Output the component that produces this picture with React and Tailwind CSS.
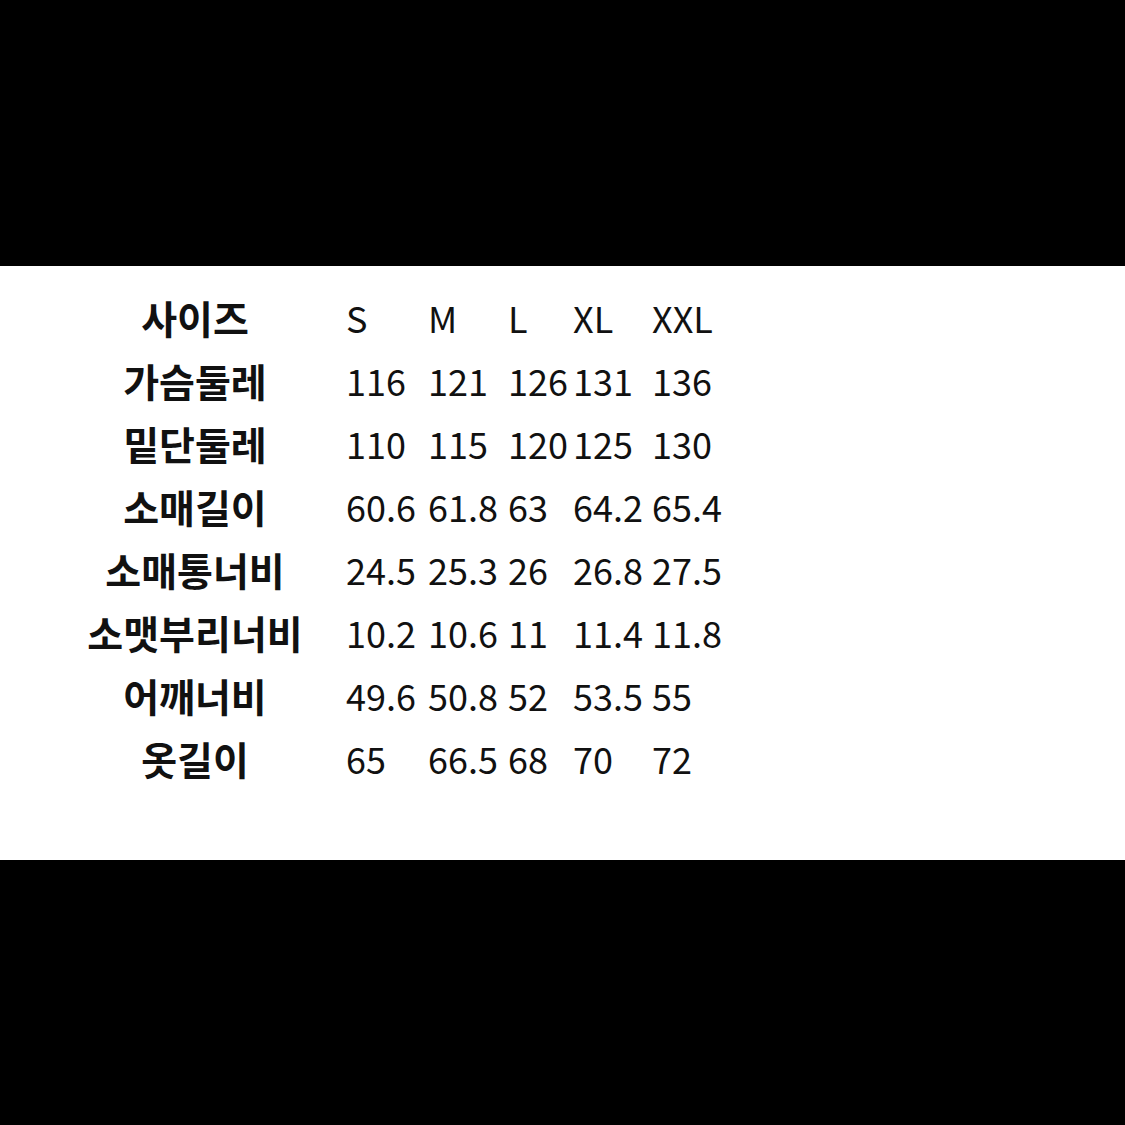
import React from "react";

const rows = [
  ["사이즈", ["S", "M", "L", "XL", "XXL"]],
  ["가슴둘레", ["116", "121", "126", "131", "136"]],
  ["밑단둘레", ["110", "115", "120", "125", "130"]],
  ["소매길이", ["60.6", "61.8", "63", "64.2", "65.4"]],
  ["소매통너비", ["24.5", "25.3", "26", "26.8", "27.5"]],
  ["소맷부리너비", ["10.2", "10.6", "11", "11.4", "11.8"]],
  ["어깨너비", ["49.6", "50.8", "52", "53.5", "55"]],
  ["옷길이", ["65", "66.5", "68", "70", "72"]],
];

const colW = ["w-[82px]", "w-[80px]", "w-[65px]", "w-[79px]", "w-[100px]"];

export default function App() {
  return (
    <div
      className="w-[1125px] h-[1125px] bg-black flex flex-col"
      style={{ fontFamily: '"Noto Sans CJK KR", "Noto Sans", sans-serif' }}
    >
      <div className="h-[266px] shrink-0" />
      <div className="h-[594px] shrink-0 bg-white pt-[20px] pl-[80px]">
        {rows.map(([label, vals]) => (
          <div key={label} className="flex items-center h-[63px] leading-[63px] text-[36px] text-black">
            <div className="w-[230px] text-center font-bold whitespace-nowrap text-[39px] text-[#111]">{label}</div>
            <div className="w-[36px]" />
            {vals.map((v, i) => (
              <div key={i} className={`${colW[i]} whitespace-nowrap font-normal text-[#111]`}>
                {v}
              </div>
            ))}
          </div>
        ))}
      </div>
      <div className="flex-1" />
    </div>
  );
}
